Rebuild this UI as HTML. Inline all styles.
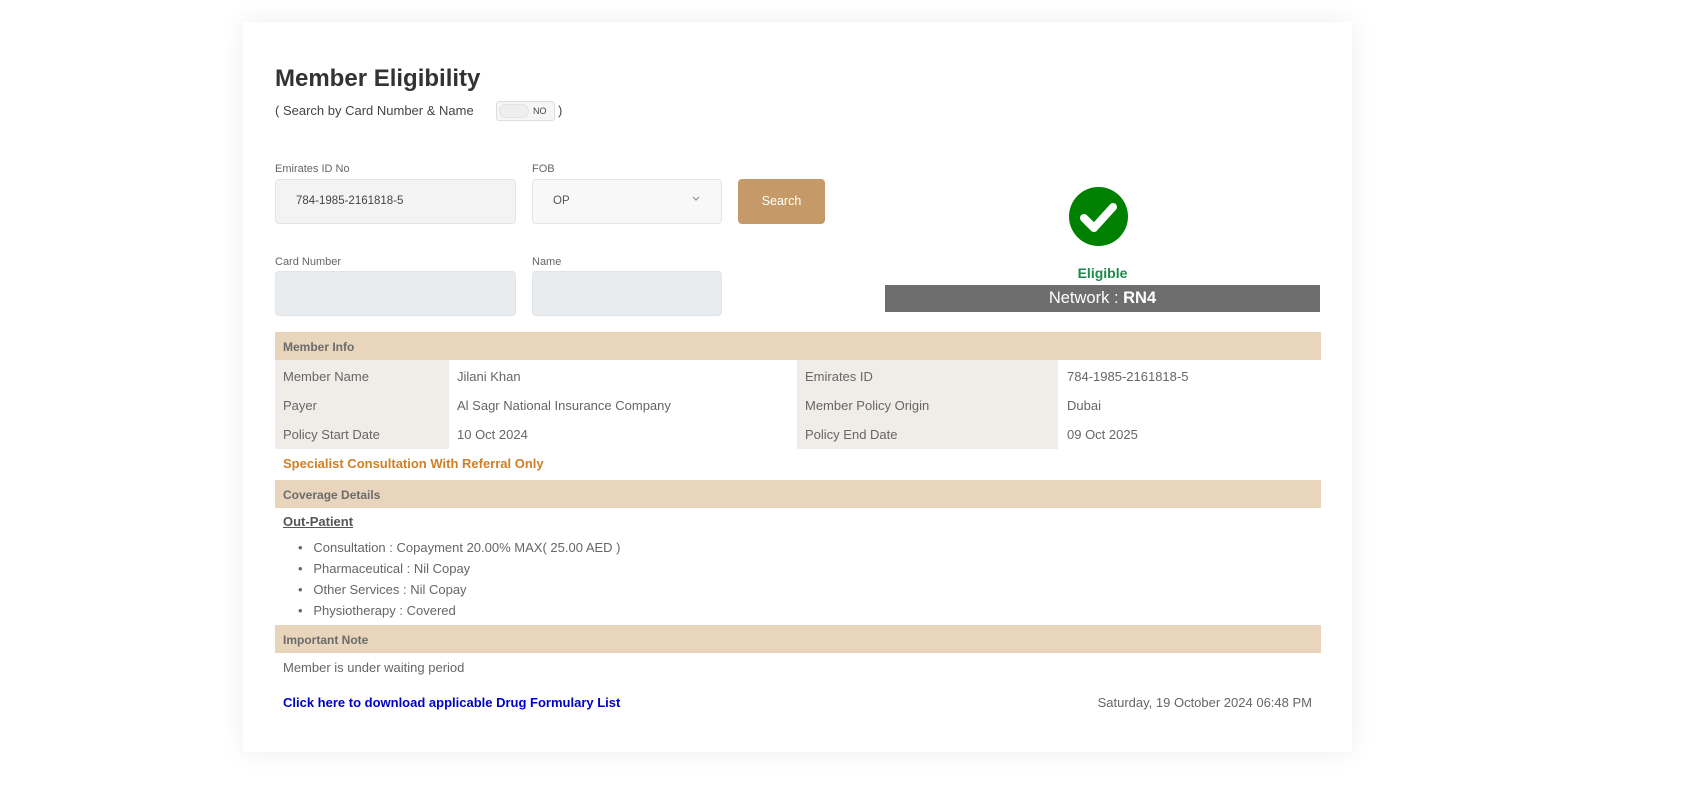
<!DOCTYPE html>
<html><head><meta charset="utf-8"><style>
*{box-sizing:border-box;margin:0;padding:0}
body{width:1695px;height:791px;background:#fff;font-family:"Liberation Sans",Arial,sans-serif;color:#666;position:relative;overflow:hidden}
.card{position:absolute;left:243px;top:22px;width:1109px;height:730px;background:#fff;box-shadow:0 0 24px rgba(0,0,0,.07)}
.a{position:absolute;white-space:nowrap}
.lbl{font-size:11px;color:#666}
.inp{position:absolute;border-radius:4px;border:1px solid #e2e5e8}
.hdr{position:absolute;left:275px;width:1046px;height:28px;background:#e8d5bc;font-size:12px;font-weight:bold;color:#6b6b6b;padding:8px 0 0 8px}
.lc{position:absolute;background:#f0ede8}
.t{font-size:13px;color:#666}
</style></head><body>
<div class="card"></div>
<div class="a" style="left:275px;top:65px;font-size:24px;font-weight:bold;color:#333">Member Eligibility</div>
<div class="a t" style="left:275px;top:103px;color:#444">( Search by Card Number &amp; Name</div>
<div class="a" style="left:496px;top:101px;width:59px;height:20px;border:1px solid #ddd;border-radius:3px;background:#f6f6f6"><div style="position:absolute;left:2px;top:2px;width:30px;height:14px;border-radius:8px;background:#eee;border:1px solid #e2e2e2"></div><span style="position:absolute;left:36px;top:4px;font-size:9px;color:#444">NO</span></div>
<div class="a t" style="left:558px;top:103px;color:#444">)</div>

<div class="a lbl" style="left:275px;top:163px">Emirates ID No</div>
<div class="inp" style="left:275px;top:179px;width:241px;height:45px;background:#f3f3f3"></div>
<div class="a" style="left:296px;top:195px;font-size:11.5px;color:#444">784-1985-2161818-5</div>
<div class="a lbl" style="left:532px;top:163px">FOB</div>
<div class="inp" style="left:532px;top:179px;width:190px;height:45px;background:#f8f8f8"></div>
<div class="a" style="left:553px;top:195px;font-size:11.5px;color:#555">OP</div>
<svg class="a" style="left:692px;top:196px" width="8" height="6" viewBox="0 0 8 6"><path d="M1 1 L4 4 L7 1" stroke="#999" stroke-width="1.3" fill="none"/></svg>
<div class="a" style="left:738px;top:179px;width:87px;height:45px;background:#c59a68;border-radius:4px;color:#fff;font-size:12.5px;text-align:center;line-height:45px">Search</div>

<div class="a lbl" style="left:275px;top:256px">Card Number</div>
<div class="inp" style="left:275px;top:271px;width:241px;height:45px;background:#e9ecef"></div>
<div class="a lbl" style="left:532px;top:256px">Name</div>
<div class="inp" style="left:532px;top:271px;width:190px;height:45px;background:#e9ecef"></div>

<svg class="a" style="left:1069px;top:187px" width="59" height="59" viewBox="0 0 59 59"><circle cx="29.5" cy="29.5" r="29.5" fill="#008000"/><path d="M15 31 L25 41 L44 20" stroke="#fff" stroke-width="8" fill="none" stroke-linecap="round" stroke-linejoin="round"/></svg>
<div class="a" style="left:885px;width:435px;top:265px;text-align:center;font-size:14px;font-weight:bold;color:#1e8a4a">Eligible</div>
<div class="a" style="left:885px;top:285px;width:435px;height:27px;background:#6e6e6e;color:#fff;text-align:center;font-size:16.5px;line-height:27px">Network : <b>RN4</b></div>

<div class="hdr" style="top:332px">Member Info</div>
<div class="lc" style="left:275px;top:360px;width:174px;height:89px"></div>
<div class="lc" style="left:797px;top:360px;width:261px;height:89px"></div>
<div class="a t" style="left:283px;top:369px">Member Name</div>
<div class="a t" style="left:457px;top:369px">Jilani Khan</div>
<div class="a t" style="left:805px;top:369px">Emirates ID</div>
<div class="a t" style="left:1067px;top:369px">784-1985-2161818-5</div>
<div class="a t" style="left:283px;top:398px">Payer</div>
<div class="a t" style="left:457px;top:398px">Al Sagr National Insurance Company</div>
<div class="a t" style="left:805px;top:398px">Member Policy Origin</div>
<div class="a t" style="left:1067px;top:398px">Dubai</div>
<div class="a t" style="left:283px;top:427px">Policy Start Date</div>
<div class="a t" style="left:457px;top:427px">10 Oct 2024</div>
<div class="a t" style="left:805px;top:427px">Policy End Date</div>
<div class="a t" style="left:1067px;top:427px">09 Oct 2025</div>
<div class="a" style="left:283px;top:456px;font-size:13px;font-weight:bold;color:#d07f24">Specialist Consultation With Referral Only</div>

<div class="hdr" style="top:480px">Coverage Details</div>
<div class="a" style="left:283px;top:514px;font-size:13px;font-weight:bold;color:#555;text-decoration:underline">Out-Patient</div>
<div class="a t" style="left:298px;top:540px">&bull;&nbsp;&nbsp; Consultation : Copayment 20.00% MAX( 25.00 AED )</div>
<div class="a t" style="left:298px;top:561px">&bull;&nbsp;&nbsp; Pharmaceutical : Nil Copay</div>
<div class="a t" style="left:298px;top:582px">&bull;&nbsp;&nbsp; Other Services : Nil Copay</div>
<div class="a t" style="left:298px;top:603px">&bull;&nbsp;&nbsp; Physiotherapy : Covered</div>

<div class="hdr" style="top:625px">Important Note</div>
<div class="a t" style="left:283px;top:660px">Member is under waiting period</div>
<div class="a" style="left:283px;top:695px;font-size:13px;font-weight:bold;color:#0000cc">Click here to download applicable Drug Formulary List</div>
<div class="a t" style="right:383px;top:695px">Saturday, 19 October 2024 06:48 PM</div>
</body></html>
